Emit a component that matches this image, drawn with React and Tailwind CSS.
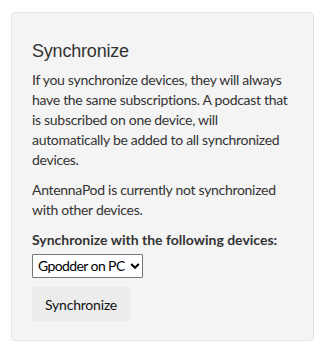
export default function App() {
  return (
    <div className="min-h-[356px] bg-white pt-[12px] pl-[11px]">
      <div
        className="w-[303px] rounded-[4px] border border-[#e3e3e3] bg-[#f4f4f4] px-[20px] pt-[25px] pb-[19px] text-[#333]"
        style={{ fontFamily: "Lato, 'Noto Sans', sans-serif" }}
      >
        <h2
          className="text-[18px] leading-[26px] font-normal text-[#333] mb-[6px] tracking-[-0.2px]"
          style={{ fontFamily: "'Liberation Sans', Arial, sans-serif" }}
        >
          Synchronize
        </h2>
        <p className="text-[14px] leading-[20px] mb-[10px] tracking-[-0.3px]">
          If you synchronize devices, they will always have the same subscriptions. A podcast that is subscribed on one device, will automatically be added to all synchronized devices.
        </p>
        <p className="text-[14px] leading-[20px] mb-[10px] tracking-[-0.3px]">
          AntennaPod is currently not synchronized with other devices.
        </p>
        <p className="text-[14px] leading-[20px] font-bold mb-[3px]">
          Synchronize with the following devices:
        </p>
        {/* device picker */}
        <div className="relative inline-block">
          <select className="block h-[24px] w-[111px] appearance-none rounded-[1px] border border-[#767676] bg-white pl-[5px] pr-[14px] text-[14px] leading-[22px] text-black tracking-[-0.6px]">
            <option>Gpodder on PC</option>
          </select>
          <svg
            className="pointer-events-none absolute right-[3px] top-[8px]"
            width="10"
            height="8"
            viewBox="0 0 10 8"
          >
            <path d="M1.2 2 L5 5.8 L8.8 2" fill="none" stroke="#000" strokeWidth="2" />
          </svg>
        </div>
        <div className="mt-[9px]">
          <button className="h-[34px] rounded-[2px] bg-[#ececec] px-[13px] text-[14px] text-[#111] tracking-[-0.2px]">
            Synchronize
          </button>
        </div>
      </div>
    </div>
  );
}
